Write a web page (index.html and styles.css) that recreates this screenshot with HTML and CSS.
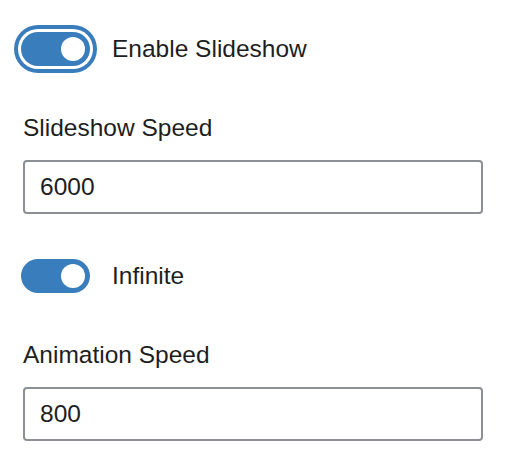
FILE: index.html
```html
<!DOCTYPE html>
<html lang="en">
<head>
  <meta charset="UTF-8">
  <meta name="viewport" content="width=device-width, initial-scale=1.0">
  <title>Slideshow Settings</title>
  <link rel="stylesheet" href="styles.css">
</head>
<body>
  <div class="panel">
    <label class="toggle-row first">
      <span class="toggle focused"><span class="knob"></span></span>
      <span class="toggle-label">Enable Slideshow</span>
    </label>

    <div class="field">
      <label class="field-label" for="slide-speed">Slideshow Speed</label>
      <input type="text" id="slide-speed" class="text-input" value="6000">
    </div>

    <label class="toggle-row">
      <span class="toggle"><span class="knob"></span></span>
      <span class="toggle-label">Infinite</span>
    </label>

    <div class="field">
      <label class="field-label" for="anim-speed">Animation Speed</label>
      <input type="text" id="anim-speed" class="text-input" value="800">
    </div>
  </div>
</body>
</html>
```

FILE: styles.css
```css
/* Reset default browser styles */
* {
  margin: 0;
  padding: 0;
  box-sizing: border-box;
}

body {
  background-color: #fff;
  color: #1e1e1e;
  font-family: "Liberation Sans", Arial, sans-serif;
  font-size: 24.5px;
  line-height: 32px;
}

.panel {
  padding: 32px 23px 0 21px;
}

/* Toggle rows */
.toggle-row {
  display: flex;
  align-items: center;
  gap: 22px;
  margin-top: 45px;
}

.toggle-row.first {
  margin-top: 0;
}

.toggle {
  display: flex;
  align-items: center;
  justify-content: flex-end;
  width: 69px;
  height: 34px;
  padding: 0 5px;
  border-radius: 17px;
  background-color: #3a7dbd;
  flex-shrink: 0;
}

.toggle.focused {
  box-shadow: 0 0 0 3px #fff, 0 0 0 7px #3a7dbd;
}

.knob {
  width: 24px;
  height: 24px;
  border-radius: 50%;
  background-color: #fff;
}

/* Text fields */
.field {
  margin-top: 46px;
  padding-left: 2px;
}

.field-label {
  display: block;
  margin-bottom: 16px;
}

.text-input {
  display: block;
  width: 100%;
  height: 54px;
  padding: 0 15px;
  border: 2px solid #8c8f94;
  border-radius: 4px;
  font-family: inherit;
  font-size: 24.5px;
  color: #1e1e1e;
  background-color: #fff;
}
```
